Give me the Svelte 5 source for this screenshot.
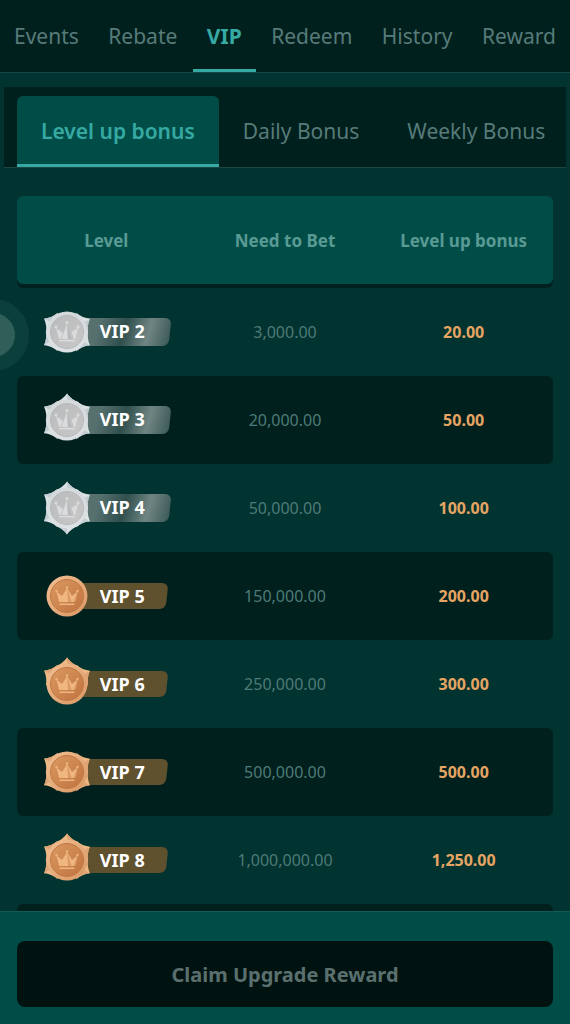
<script lang="ts">
  type Metal = "silver" | "bronze";

  const sections = ["Events", "Rebate", "VIP", "Redeem", "History", "Reward"];
  const bonusTabs = ["Level up bonus", "Daily Bonus", "Weekly Bonus"];

  // spikes are angles in degrees, clockwise from the top of the medal
  const sides = [60, 120, 240, 300];
  const levels: { name: string; metal: Metal; spikes: number[]; bet: string; bonus: string }[] = [
    { name: "VIP 2", metal: "silver", spikes: sides, bet: "3,000.00", bonus: "20.00" },
    { name: "VIP 3", metal: "silver", spikes: [0, ...sides], bet: "20,000.00", bonus: "50.00" },
    { name: "VIP 4", metal: "silver", spikes: [0, 180, ...sides], bet: "50,000.00", bonus: "100.00" },
    { name: "VIP 5", metal: "bronze", spikes: [], bet: "150,000.00", bonus: "200.00" },
    { name: "VIP 6", metal: "bronze", spikes: [0, 60, 300], bet: "250,000.00", bonus: "300.00" },
    { name: "VIP 7", metal: "bronze", spikes: sides, bet: "500,000.00", bonus: "500.00" },
    { name: "VIP 8", metal: "bronze", spikes: [0, ...sides], bet: "1,000,000.00", bonus: "1,250.00" },
  ];

  let section = $state("VIP");
  let bonusTab = $state("Level up bonus");
</script>

<div class="page">
  <nav class="sections">
    {#each sections as name}
      <button class="section" class:active={section === name} onclick={() => (section = name)}>{name}</button>
    {/each}
  </nav>

  <div class="bonus-tabs">
    {#each bonusTabs as name}
      <button class="bonus-tab" class:active={bonusTab === name} onclick={() => (bonusTab = name)}>{name}</button>
    {/each}
  </div>

  <main class="levels">
    <table>
      <thead>
        <tr>
          <th>Level</th>
          <th>Need to Bet</th>
          <th>Level up bonus</th>
        </tr>
      </thead>
      <tbody>
        {#each levels as level}
          <tr>
            <td>
              <div class="badge {level.metal}">
                <svg class="medal" width="48" height="56" viewBox="-24 -28 48 56" aria-hidden="true">
                  <defs>
                    <linearGradient id="rim-silver" x1="0" y1="0" x2="0" y2="1">
                      <stop offset="0" stop-color="#d3d8da" />
                      <stop offset="1" stop-color="#dde1e3" />
                    </linearGradient>
                    <linearGradient id="face-silver" x1="0" y1="0" x2="1" y2="1">
                      <stop offset="0" stop-color="#b9babb" />
                      <stop offset="1" stop-color="#c8c8c9" />
                    </linearGradient>
                    <linearGradient id="rim-bronze" x1="0" y1="0" x2="1" y2="1">
                      <stop offset="0" stop-color="#f2bf92" />
                      <stop offset="1" stop-color="#d99763" />
                    </linearGradient>
                    <linearGradient id="face-bronze" x1="0" y1="0" x2="1" y2="1">
                      <stop offset="0" stop-color="#d99860" />
                      <stop offset="1" stop-color="#c27440" />
                    </linearGradient>
                  </defs>
                  {#each level.spikes as angle}
                    <g transform="rotate({angle})">
                      <path class="spike" d="M0-26.500Q4-20.500 12-17.500L0-12-12-17.500Q-4-20.500 0-26.500z" />
                      <path class="spike-shade" d="M0-26.500Q4-20.500 12-17.500L0-12z" />
                    </g>
                  {/each}
                  <circle r="20.5" fill="url(#rim-{level.metal})" />
                  <circle class="ring" r="16.500" fill="url(#face-{level.metal})" />
                  {#if level.metal === "silver"}
                    <g class="crown">
                      <path d="M0-8L5 7H-5.500z" />
                      <path class="fold" d="M0-8L5 7H1z" />
                      <path d="M-11-4L-4 1-6.500 7H-8z" />
                      <path d="M11-4L4.500 0 7 7H8.500z" />
                      <path d="M-8 8H8V9.500H-8z" />
                      <circle cy="-9.500" r="1.500" />
                      <circle cx="-11" cy="-5" r="1.500" />
                      <circle cx="11" cy="-5" r="1.500" />
                    </g>
                  {:else}
                    <g class="crown">
                      <path d="M-8 6L-10.500-4.500-5 0 0-8 5 0 10.500-4.500 8 6z" />
                      <path class="fold" d="M0-8L4.500 6H1z" />
                      <path class="fold" d="M10.500-4.500L8 6H6.500z" />
                      <path d="M-7.500 7.500H7.500V9H-7.500z" />
                      <circle cy="-8.500" r="1.200" />
                      <circle cx="-10.500" cy="-5" r="1.200" />
                      <circle cx="10.500" cy="-5" r="1.200" />
                    </g>
                  {/if}
                </svg>
                <span class="tag">{level.name}</span>
              </div>
            </td>
            <td class="bet">{level.bet}</td>
            <td class="bonus">{level.bonus}</td>
          </tr>
        {/each}
        <tr class="next"><td></td><td></td><td></td></tr>
      </tbody>
    </table>
  </main>

  <button class="assist" aria-label="Open quick menu"></button>

  <footer class="claim-bar">
    <button class="claim" disabled>Claim Upgrade Reward</button>
  </footer>
</div>

<style>
  :global(body) {
    background: #013330;
  }

  .page {
    --bg: #013330;
    --dark: #00201e;
    --panel: #004d47;
    --line: #1a4744;
    --accent: #36a9a3;
    --muted: #587b79;
    position: relative;
    display: flex;
    flex-direction: column;
    height: 100vh;
    overflow: hidden;
    background: var(--bg);
    font-family: "Noto Sans", "Open Sans", sans-serif;
  }

  button {
    margin: 0;
    border: 0;
    background: none;
    color: inherit;
    font: inherit;
    white-space: nowrap;
    cursor: pointer;
  }

  .sections {
    display: flex;
    justify-content: space-between;
    flex-shrink: 0;
    height: 72px;
    background: var(--dark);
    border-bottom: 1px solid var(--line);
    color: var(--muted);
    font-size: 21px;
  }

  .section {
    padding: 0 14px;
    border-top: 2px solid transparent;
    border-bottom: 3px solid transparent;
  }

  .section.active {
    border-bottom-color: var(--accent);
    color: var(--accent);
    font-weight: 700;
  }

  .bonus-tabs {
    display: flex;
    flex-shrink: 0;
    margin: 14px 4px 0;
    padding: 9px 0 0 13px;
    background: var(--dark);
    border-bottom: 1px solid var(--line);
    color: var(--muted);
    font-size: 21px;
  }

  .bonus-tab {
    height: 71px;
    padding: 2px 24px 0;
    border-bottom: 3px solid transparent;
  }

  .bonus-tab.active {
    background: var(--panel);
    border-bottom-color: var(--accent);
    border-radius: 6px 6px 0 0;
    color: var(--accent);
    font-weight: 600;
  }

  .levels {
    flex: 1;
    min-height: 0;
    overflow: hidden;
    padding: 28px 17px 0;
  }

  table,
  thead,
  tbody {
    display: block;
  }

  tr {
    display: grid;
    grid-template-columns: repeat(3, 1fr);
    align-items: center;
    height: 88px;
    border-radius: 6px;
    text-align: center;
  }

  th,
  td {
    padding: 0;
  }

  thead tr {
    margin-bottom: 4px;
    background: var(--panel);
    box-shadow: 0 4px 0 #00211f;
    color: #5a9a94;
    font-size: 17px;
  }

  th {
    font-weight: 700;
  }

  tbody tr:nth-child(even) {
    background: var(--dark);
  }

  .bet {
    color: #4f7a77;
    font-size: 16px;
  }

  .bonus {
    color: #e6a562;
    font-size: 16px;
    font-weight: 700;
  }

  .badge {
    display: flex;
    align-items: center;
    width: 127px;
    margin: 0 auto;
  }

  .medal {
    z-index: 1;
    flex-shrink: 0;
  }

  .tag {
    position: relative;
    z-index: 0;
    box-sizing: border-box;
    width: 103px;
    height: 28px;
    margin-left: -24px;
    padding-left: 33px;
    color: #fff;
    font-size: 18px;
    font-weight: 700;
    line-height: 26px;
    text-align: left;
  }

  .tag::before {
    content: "";
    position: absolute;
    inset: 0;
    z-index: -1;
    border-radius: 4px 6px 6px 4px;
    background: linear-gradient(100deg, #56706e 30%, #304f4d 55%, #6f8583 78%, #3c5957);
    transform: skewX(-6deg);
  }

  .bronze .tag {
    width: 100px;
    height: 26px;
  }

  .bronze .tag::before {
    background: #5f502e;
  }

  .silver .spike { fill: #dde3e5; }
  .silver .spike-shade { fill: #c3cccf; }
  .silver .ring { stroke: #b6b9bb; }
  .silver .crown { fill: #dadbdc; }
  .silver .fold { fill: #b4b6b7; }
  .bronze .spike { fill: #eeb885; }
  .bronze .spike-shade { fill: #dfa476; }
  .bronze .ring { stroke: #bf7843; }
  .bronze .crown { fill: #efb681; }
  .bronze .fold { fill: #dc9a62; }

  .assist {
    position: absolute;
    top: 299px;
    left: -43px;
    width: 72px;
    height: 72px;
    padding: 0;
    border: 14px solid #0b3f3b;
    border-radius: 50%;
    background: #305f5a;
  }

  .claim-bar {
    flex-shrink: 0;
    padding: 29px 17px 17px;
    background: var(--panel);
    border-top: 1px solid #125a55;
  }

  .claim {
    display: block;
    width: 100%;
    height: 66px;
    border-radius: 8px;
    background: #001311;
    color: #5b706e;
    font-size: 20px;
    font-weight: 700;
    cursor: default;
  }
</style>
